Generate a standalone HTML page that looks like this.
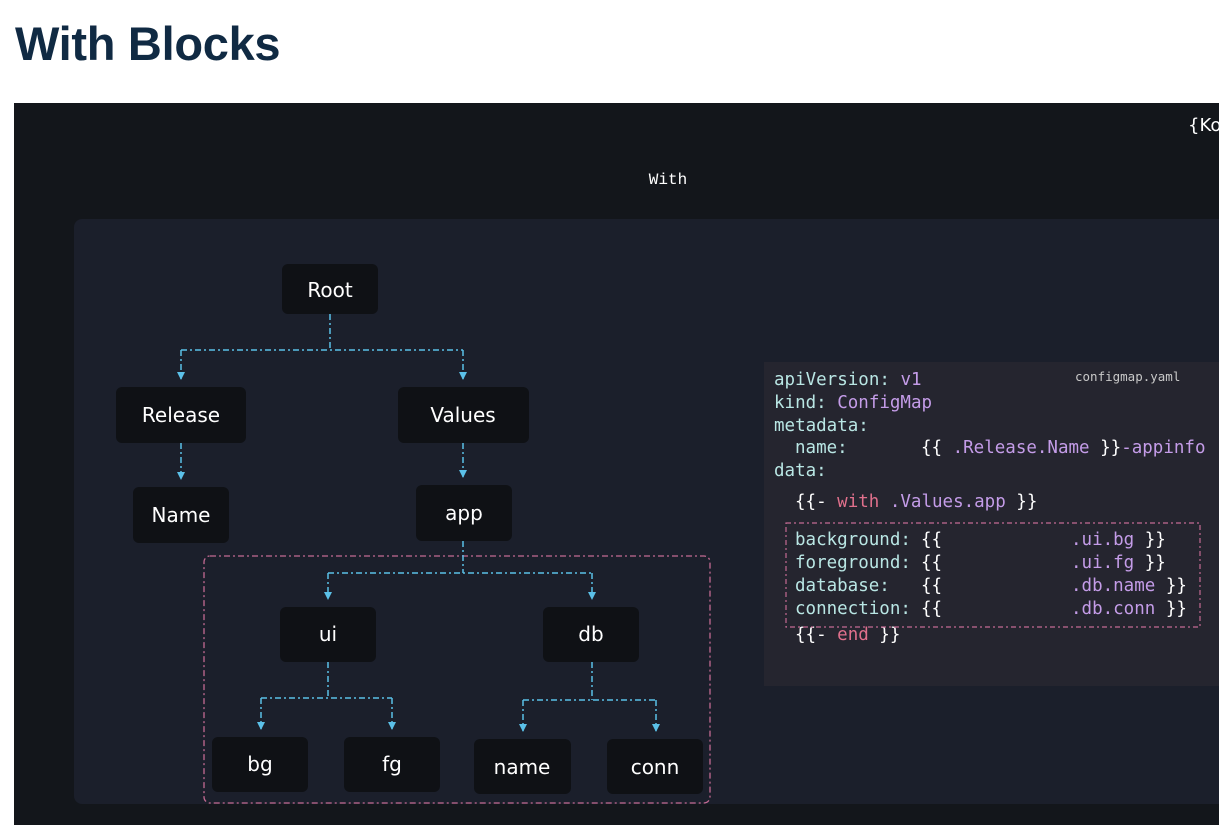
<!DOCTYPE html>
<html><head><meta charset="utf-8"><style>
body{margin:0;width:1219px;height:825px;overflow:hidden;background:#fff;position:relative;font-family:"Liberation Sans",sans-serif}
h1{position:absolute;left:15px;top:14px;margin:0;font-size:47px;font-weight:bold;color:#102a43;letter-spacing:-0.3px;line-height:60px}
svg{position:absolute;left:0;top:0}
</style></head><body>
<h1>With Blocks</h1>
<svg width="1219" height="825" xmlns="http://www.w3.org/2000/svg">
<defs><marker id="a" markerWidth="10" markerHeight="10" refX="4" refY="7" orient="0" markerUnits="userSpaceOnUse"><path d="M0,0 L8,0 L4,8 Z" fill="#5bc0e8"/></marker></defs>
<rect x="14" y="103" width="1205" height="722" fill="#13161b"/>
<text x="668" y="184" fill="#fff" font-family="Liberation Mono,monospace" font-size="16" text-anchor="middle">With</text>
<text x="1188" y="131" fill="#fff" font-family="DejaVu Sans,sans-serif" font-size="18">{Ko</text>
<rect x="74" y="219" width="1160" height="585" rx="8" fill="#1b1f2b"/>
<g fill="#0f1115">
<rect x="282" y="264" width="96" height="50" rx="6"/>
<rect x="116" y="387" width="130" height="56" rx="6"/>
<rect x="398" y="387" width="131" height="56" rx="6"/>
<rect x="133" y="487" width="96" height="56" rx="6"/>
<rect x="416" y="485" width="96" height="56" rx="6"/>
<rect x="280" y="607" width="96" height="55" rx="6"/>
<rect x="543" y="607" width="96" height="55" rx="6"/>
<rect x="212" y="737" width="96" height="55" rx="6"/>
<rect x="344" y="737" width="96" height="55" rx="6"/>
<rect x="474" y="739" width="97" height="55" rx="6"/>
<rect x="607" y="739" width="96" height="55" rx="6"/>
</g>
<g fill="#fff" font-family="DejaVu Sans,sans-serif" font-size="20" text-anchor="middle">
<text x="330" y="297">Root</text>
<text x="181" y="422">Release</text>
<text x="463" y="422">Values</text>
<text x="181" y="522">Name</text>
<text x="464" y="520">app</text>
<text x="328" y="641">ui</text>
<text x="591" y="641">db</text>
<text x="260" y="771">bg</text>
<text x="392" y="771">fg</text>
<text x="522" y="774">name</text>
<text x="655" y="774">conn</text>
</g>
<rect x="204" y="556" width="506" height="247" rx="6" fill="none" stroke="#c46a93" stroke-width="1.3" stroke-dasharray="6 3 2 3"/>
<g fill="none" stroke="#5bc0e8" stroke-width="1.5" stroke-dasharray="6 3 2 3">
<path d="M330 314V350M181 350H463"/>
<path d="M181 350V379" marker-end="url(#a)"/><path d="M463 350V379" marker-end="url(#a)"/>
<path d="M181 443V479" marker-end="url(#a)"/><path d="M463 443V477" marker-end="url(#a)"/>
<path d="M463 541V573M328 573H592"/>
<path d="M328 573V599" marker-end="url(#a)"/><path d="M592 573V599" marker-end="url(#a)"/>
<path d="M328 662V698M261 698H392"/>
<path d="M261 698V729" marker-end="url(#a)"/><path d="M392 698V729" marker-end="url(#a)"/>
<path d="M592 662V700M523 700H656"/>
<path d="M523 700V731" marker-end="url(#a)"/><path d="M656 700V731" marker-end="url(#a)"/>
</g>
<rect x="764" y="362" width="460" height="324" fill="#25252f"/>
<text x="1075" y="381" fill="#c8c8c8" font-family="DejaVu Sans Mono,monospace" font-size="12.5">configmap.yaml</text>
<g font-family="DejaVu Sans Mono,monospace" font-size="17.5" fill="#b9e6e4">
<text x="774" y="385">apiVersion: <tspan fill="#c49ce8">v1</tspan></text>
<text x="774" y="408">kind: <tspan fill="#c49ce8">ConfigMap</tspan></text>
<text x="774" y="431">metadata:</text>
<text x="795" y="453">name:</text>
<text x="921" y="453"><tspan fill="#fff">{{ </tspan><tspan fill="#c49ce8">.Release.Name</tspan><tspan fill="#fff"> }}</tspan><tspan fill="#c49ce8">-appinfo</tspan></text>
<text x="774" y="476">data:</text>
<text x="795" y="507"><tspan fill="#fff">{{- </tspan><tspan fill="#e0708c">with</tspan> <tspan fill="#c49ce8">.Values.app</tspan><tspan fill="#fff"> }}</tspan></text>
<text x="795" y="545">background:</text>
<text x="795" y="568">foreground:</text>
<text x="795" y="591">database:</text>
<text x="795" y="614">connection:</text>
<g fill="#fff"><text x="921" y="545">{{</text><text x="921" y="568">{{</text><text x="921" y="591">{{</text><text x="921" y="614">{{</text></g>
<text x="1071" y="545" fill="#c49ce8">.ui.bg <tspan fill="#fff">}}</tspan></text>
<text x="1071" y="568" fill="#c49ce8">.ui.fg <tspan fill="#fff">}}</tspan></text>
<text x="1071" y="591" fill="#c49ce8">.db.name <tspan fill="#fff">}}</tspan></text>
<text x="1071" y="614" fill="#c49ce8">.db.conn <tspan fill="#fff">}}</tspan></text>
<text x="795" y="640"><tspan fill="#fff">{{- </tspan><tspan fill="#e0708c">end</tspan><tspan fill="#fff"> }}</tspan></text>
</g>
<rect x="786" y="523" width="414" height="104" fill="none" stroke="#c46a93" stroke-width="1.2" stroke-dasharray="5 3 2 3"/>
</svg>
</body></html>
